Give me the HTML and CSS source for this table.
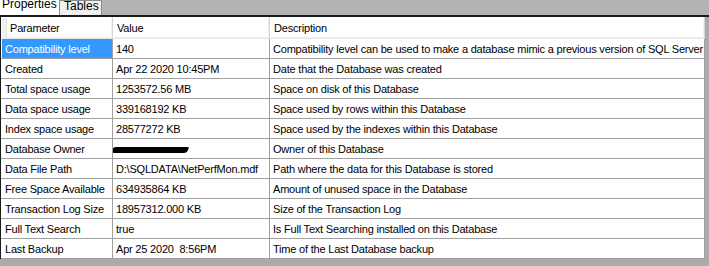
FILE: index.html
```html
<!DOCTYPE html>
<html>
<head>
<meta charset="utf-8">
<link rel="stylesheet" href="styles.css">
</head>
<body>
<div class="window">
  <div class="tabs">
    <div class="tab active">Properties</div>
    <div class="tab">Tables</div>
  </div>
  <div class="panel">
    <table class="grid">
      <colgroup><col class="c1"><col class="c2"><col class="c3"></colgroup>
      <thead>
        <tr><th class="first">Parameter</th><th>Value</th><th>Description</th></tr>
      </thead>
      <tbody>
        <tr><td class="sel">Compatibility level</td><td>140</td><td>Compatibility level can be used to make a database mimic a previous version of SQL Server</td></tr>
        <tr><td>Created</td><td>Apr 22 2020 10:45PM</td><td>Date that the Database was created</td></tr>
        <tr><td>Total space usage</td><td>1253572.56 MB</td><td>Space on disk of this Database</td></tr>
        <tr><td>Data space usage</td><td>339168192 KB</td><td>Space used by rows within this Database</td></tr>
        <tr><td>Index space usage</td><td>28577272 KB</td><td>Space used by the indexes within this Database</td></tr>
        <tr><td>Database Owner</td><td class="owner"><span class="redact"></span></td><td>Owner of this Database</td></tr>
        <tr><td>Data File Path</td><td>D:\SQLDATA\NetPerfMon.mdf</td><td>Path where the data for this Database is stored</td></tr>
        <tr><td>Free Space Available</td><td>634935864 KB</td><td>Amount of unused space in the Database</td></tr>
        <tr><td>Transaction Log Size</td><td>18957312.000 KB</td><td>Size of the Transaction Log</td></tr>
        <tr><td>Full Text Search</td><td>true</td><td>Is Full Text Searching installed on this Database</td></tr>
        <tr><td>Last Backup</td><td>Apr 25 2020&nbsp; 8:56PM</td><td>Time of the Last Database backup</td></tr>
      </tbody>
    </table>
  </div>
</div>
</body>
</html>
```
FILE: styles.css
```css
html, body {
  margin: 0;
  padding: 0;
  background: #ababab;
}
.window {
  width: 709px;
  height: 266px;
  overflow: hidden;
  font-family: "Liberation Sans", Arial, sans-serif;
  font-size: 11px;
  color: #000;
}
.tabs {
  display: flex;
  height: 15px;
  background: #b4b4b4;
  align-items: flex-end;
}
.tab {
  height: 15px;
  box-sizing: border-box;
  font-size: 12px;
  overflow: hidden;
}
.tab.active {
  background: #fff;
  width: 59px;
  padding: 0 0 0 2px;
  line-height: 9px;
}
.tab:not(.active) {
  background: #f0f0f0;
  border: 1px solid #8a8a8a;
  border-bottom: none;
  width: 43px;
  padding-left: 4px;
  line-height: 11px;
}
.panel {
  border-top: 2px solid #1a1a1a;
  border-left: 1px solid #1a1a1a;
  background: #ababab;
}
.grid {
  border-collapse: collapse;
  table-layout: fixed;
  width: 703px;
  background: #fff;
  border-left: 1px solid #fff;
  border-top: 1px solid #fff;
  letter-spacing: -0.2px;
}
.c1 { width: 111px; }
.c2 { width: 157px; }
.c3 { width: 435px; }
th {
  height: 20px;
  padding: 0 0 0 4px;
  text-align: left;
  font-weight: normal;
  background: #fff;
  border-right: 1px solid #d5d5d5;
  border-bottom: 1px solid #e6e6e6;
  box-shadow: inset -1px -1px 0 #f0f0f0;
  white-space: nowrap;
  font-size: 11px;
}
th.first {
  padding-left: 8px;
  box-shadow: inset -1px -1px 0 #f0f0f0, inset 4px 0 0 #f0f0f0, inset 5px 0 0 #e0e0e0;
}
td {
  height: 19px;
  padding: 0 0 0 3px;
  border-right: 1px solid #a0a0a0;
  border-bottom: 1px solid #a0a0a0;
  white-space: nowrap;
  overflow: hidden;
  font-size: 11px;
}
td.sel {
  background: #3399ff;
  color: #fff;
}
td.owner {
  padding-left: 0;
}
.redact {
  display: inline-block;
  width: 76px;
  height: 6px;
  margin-left: -1px;
  background: #000;
  vertical-align: middle;
  transform: skewX(-20deg);
  border-radius: 3px 1px 3px 1px;
}
```
